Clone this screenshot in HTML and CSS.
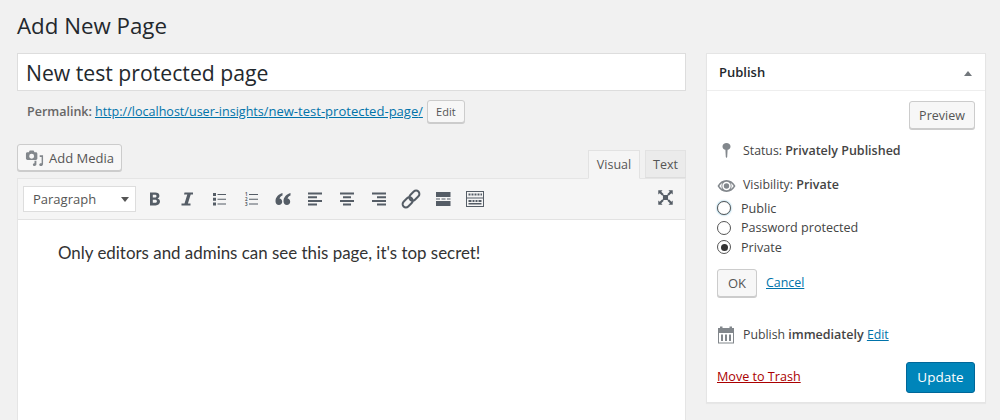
FILE: index.html
```html
<!DOCTYPE html>
<html lang="en">
<head>
<meta charset="utf-8">
<title>Add New Page</title>
<link rel="stylesheet" href="styles.css">
</head>
<body>
<div class="wrap">
  <h1 class="page-title">Add New Page</h1>
  <div class="columns">
    <main class="main">
      <input class="title-input" type="text" value="New test protected page">
      <div class="permalink">
        <span class="permalink-label">Permalink:</span>
        <a href="#" class="link">http://localhost/user-insights/<b class="slug">new-test-protected-page</b>/</a>
        <button class="btn btn-small">Edit</button>
      </div>
      <div class="editor-top">
        <button class="btn btn-media">
          <svg class="media-icon" viewBox="0 0 20 20"><path d="M1 4.500h3l1-2h4l1 2h1.500c.8 0 1.500.7 1.500 1.500v5c0 .8-.7 1.500-1.500 1.500H2.500C1.700 12.500 1 11.800 1 11V6c0-.8.700-1.500 1.500-1.500zM7 6a2.600 2.600 0 1 0 0 5.200A2.600 2.600 0 0 0 7 6z" fill-rule="evenodd"/><path d="M15.500 7.500H19v9.300c0 1.300-1 2.200-2.200 2.200-1 0-1.800-.6-1.800-1.500s.8-1.500 1.700-1.500h.8V9.500h-2zM10 13.500h2v3.700c0 1-.9 1.800-2 1.800-.9 0-1.700-.6-1.700-1.400 0-.9.800-1.500 1.700-1.500z"/></svg>
          Add Media
        </button>
        <div class="tabs">
          <span class="tab tab-active">Visual</span>
          <span class="tab tab-text">Text</span>
        </div>
      </div>
      <div class="editor">
        <div class="toolbar">
          <div class="format-select">Paragraph<i class="caret"></i></div>
          <svg class="tool" viewBox="0 0 20 20"><path fill-rule="evenodd" d="M5 3.500h5.300c2.500 0 4.100 1.200 4.100 3.200 0 1.300-.7 2.300-1.900 2.800 1.500.4 2.500 1.500 2.500 3.100 0 2.300-1.700 3.900-4.400 3.900H5zM7.800 5.700v2.900h1.900c1.100 0 1.800-.5 1.800-1.500s-.7-1.400-1.800-1.400zm0 5v3.100h2.100c1.300 0 2-.6 2-1.600s-.7-1.500-2-1.500z"/></svg>
          <svg class="tool" viewBox="0 0 20 20"><path d="M7.500 3.500H16v2h-2.300L10.900 14.500h2.600v2H4.500v-2h3L10.300 5.500H7z"/></svg>
          <svg class="tool" viewBox="0 0 20 20"><path d="M4 4h3v3H4zm0 4.800h3v3H4zm0 4.800h3v3H4zM8.500 5h8.500v1H8.500zm0 4.800h8.500v1H8.500zm0 4.800h8.500v1H8.500z"/></svg>
          <svg class="tool" viewBox="0 0 20 20"><path d="M8 5h9v1H8zm0 4.800h9v1H8zm0 4.800h9v1H8z"/><text x="4" y="7" class="num">1</text><text x="4" y="12" class="num">2</text><text x="4" y="17" class="num">3</text></svg>
          <svg class="tool" viewBox="0 0 20 20"><path d="M9.500 4C5.500 5.400 2.500 8 2.500 12.200c0 2.300 1.400 3.800 3.400 3.800 1.900 0 3.300-1.400 3.300-3.300 0-1.800-1.200-3-2.700-3.200.4-1.300 1.400-2.400 3-3.100zm8 0c-4 1.400-7 4-7 8.200 0 2.300 1.400 3.800 3.400 3.800 1.900 0 3.300-1.400 3.300-3.300 0-1.800-1.200-3-2.700-3.200.4-1.300 1.400-2.400 3-3.100z"/></svg>
          <svg class="tool" viewBox="0 0 20 20"><path d="M3 3.500h14v2H3zm0 3.700h9v2H3zm0 3.700h14v2H3zm0 3.700h9v2H3z"/></svg>
          <svg class="tool" viewBox="0 0 20 20"><path d="M3 3.500h14v2H3zm3 3.700h8v2H6zm-3 3.700h14v2H3zm3 3.700h8v2H6z"/></svg>
          <svg class="tool" viewBox="0 0 20 20"><path d="M3 3.500h14v2H3zm5 3.700h9v2H8zm-5 3.700h14v2H3zm5 3.700h9v2H8z"/></svg>
          <svg class="tool" viewBox="0 0 20 20"><g transform="rotate(-45 10 10)" fill="none" stroke="#555d66" stroke-width="2"><rect x="-.5" y="6.700" width="11.500" height="6.600" rx="3.300"/><rect x="9" y="6.700" width="11.500" height="6.600" rx="3.300"/></g></svg>
          <svg class="tool" viewBox="0 0 20 20"><path d="M3 3h14.500v5H3zm0 9h14.500v5H3zM3 9.500h4v1H3zm5.500 0h4v1h-4zm5.500 0h3.500v1H14z"/></svg>
          <svg class="tool" viewBox="0 0 20 20"><path fill-rule="evenodd" d="M1 2h18v16H1zm1 1v5.500h16V3zm0 6.500V17h16V9.500zM3.500 4.500h2v2h-2zm3 0h2v2h-2zm3 0h2v2h-2zm3 0h2v2h-2zm3 0h1.500v2h-1.500zM3.500 11h3v2h-3zm4 0h2v2h-2zm3 0h2v2h-2zm3 0h3v2h-3zM3.500 14h13v1.500h-13z"/></svg>
          <svg class="tool tool-full" viewBox="0 0 20 20"><path d="M7 7h6v6H7zM1.500 1.500h5L5 3.200l3 3-1.800 1.800-3-3-1.700 1.500zm17 0v5L16.800 5l-3 3L12 6.200l3-3-1.500-1.700zm-17 17v-5L3.200 15l3-3L8 13.800l-3 3 1.500 1.700zm17 0h-5l1.700-1.700-3-3 1.800-1.800 3 3 1.500-1.500z"/></svg>
        </div>
        <div class="content">
          <p class="content-text">Only editors and admins can see this page, it's top secret!</p>
        </div>
      </div>
    </main>
    <aside class="panel">
      <h2 class="panel-head">Publish<i class="panel-toggle"></i></h2>
      <div class="panel-body">
        <div class="preview-row"><button class="btn btn-preview">Preview</button></div>
        <div class="row row-status">
          <svg class="meta-icon" viewBox="0 0 20 20"><path d="M9.500 3c2.200 0 4 1.400 4 3.400 0 1.700-1.200 3-2.900 3.400L10.200 17l-.7 1-.7-1-.4-7.200C6.700 9.400 5.500 8.100 5.500 6.400 5.500 4.400 7.300 3 9.500 3z"/></svg>
          <span>Status: <b class="strong">Privately Published</b></span>
        </div>
        <div class="row row-visibility">
          <svg class="meta-icon" viewBox="0 0 20 20"><g transform="translate(0 2)"><path fill-rule="evenodd" d="M9.500 4C13.300 4 16.400 6.200 18.500 10c-2.100 3.800-5.200 6-9 6S2.600 13.800.5 10C2.600 6.200 5.700 4 9.500 4zM9.500 5.800a4.200 4.200 0 1 0 0 8.400 4.200 4.200 0 0 0 0-8.400zM2.300 10c.8 1.300 2 2.500 3.200 3.300A6 6 0 0 1 5.500 6.700C4.300 7.500 3.100 8.700 2.300 10zm11.200-3.300a6 6 0 0 1 0 6.600c1.200-.8 2.400-2 3.200-3.300-.8-1.300-2-2.500-3.200-3.300zM9.500 7.300a2.700 2.700 0 1 1 0 5.400 2.700 2.700 0 0 1 0-5.400z"/></g></svg>
          <span>Visibility: <b class="strong">Private</b></span>
        </div>
        <div class="radios">
          <label class="radio-row"><i class="radio radio-focus"></i>Public</label>
          <label class="radio-row"><i class="radio"></i>Password protected</label>
          <label class="radio-row"><i class="radio radio-on"></i>Private</label>
        </div>
        <div class="ok-row">
          <button class="btn btn-ok">OK</button>
          <a href="#" class="link">Cancel</a>
        </div>
        <div class="row row-date">
          <svg class="meta-icon" viewBox="0 0 20 20"><path fill-rule="evenodd" d="M1 3h2V1.500h2.500V3h7V1.500H15V3h2v15.500H1zM2 8v9.500h14V8zM4 9.500h2V16H4zm4 0h2V16H8zm4 0h2V16h-2z"/></svg>
          <span>Publish <b class="strong">immediately</b> <a href="#" class="link">Edit</a></span>
        </div>
        <div class="actions">
          <a href="#" class="trash">Move to Trash</a>
          <button class="btn-primary">Update</button>
        </div>
      </div>
    </aside>
  </div>
</div>
</body>
</html>
```
FILE: styles.css
```css
* { box-sizing: border-box; }
html, body { height: 420px; overflow: hidden; }
body {
  margin: 0;
  background: #f1f1f1;
  color: #444;
  font: 13px/19px "Open Sans", sans-serif;
}
.wrap { padding: 0 14px 0 17px; }
.page-title {
  margin: 0;
  padding-top: 11px;
  height: 53px;
  color: #23282d;
  font-size: 22.300px;
  line-height: 30px;
  font-weight: 400;
}
.columns { display: grid; grid-template-columns: 669px 280px; column-gap: 20px; align-items: start; }
.title-input {
  display: block;
  width: 100%;
  height: 38px;
  padding: 0 8px;
  border: 1px solid #ddd;
  background: #fff;
  color: #23282d;
  font: 21.200px/36px "Open Sans", sans-serif;
  outline: 0;
}
.permalink {
  display: flex;
  align-items: center;
  height: 24px;
  margin-top: 8px;
  padding-left: 10px;
  color: #666;
}
.permalink-label { font-weight: 600; margin-right: 3px; font-size: 12.500px; }
.link { color: #0073aa; text-decoration: underline; }
.permalink .link { font-size: 12.550px; margin-right: 4px; }
.slug { font-weight: 400; font-size: 13.050px; }
.btn {
  display: inline-flex;
  align-items: center;
  justify-content: center;
  border: 1px solid #ccc;
  border-radius: 3px;
  background: #f7f7f7;
  box-shadow: 0 1px 0 #ccc;
  color: #555;
  font: 13px "Open Sans", sans-serif;
  padding: 0;
}
.btn-small { width: 38px; height: 23px; font-size: 11px; }
.editor-top { display: flex; justify-content: space-between; align-items: flex-end; height: 36px; margin-top: 20px; margin-bottom: -1px; position: relative; }
.btn-media { width: 105px; height: 27px; gap: 5px; margin-bottom: 8px; justify-content: flex-start; padding-left: 7px; }
.media-icon { width: 19px; height: 19px; fill: #82878c; }
.tabs { display: flex; gap: 5px; margin-bottom: 1px; }
.tab {
  display: block;
  width: 41px;
  height: 28px;
  border: 1px solid #e2e2e2;
  border-bottom-color: #ddd;
  background: #ebebeb;
  color: #555;
  font-size: 12.500px;
  line-height: 28px;
  text-align: center;
}
.tab-active { width: 52px; height: 29px; background: #f5f5f5; border-bottom-color: #f5f5f5; margin-bottom: -1px; position: relative; z-index: 1; }
.editor { border: 1px solid #e5e5e5; border-bottom: 0; background: #fff; height: 243px; }
.toolbar {
  display: flex;
  align-items: center;
  height: 41px;
  padding: 0 10px 0 5px;
  background: #f5f5f5;
  border-bottom: 1px solid #e2e2e2;
}
.format-select {
  position: relative;
  width: 113px;
  height: 26px;
  padding-left: 9px;
  border: 1px solid #ddd;
  background: #fff;
  color: #555;
  font-size: 13px;
  line-height: 24px;
  margin-right: 3px;
}
.caret {
  position: absolute;
  right: 6px;
  top: 10px;
  border: 4px solid transparent;
  border-top: 5px solid #555;
  border-bottom: 0;
}
.tool { width: 20px; height: 20px; margin: 0 6px; fill: #555d66; flex: none; }
.tool-full { margin: 0 1px 4px auto; width: 17px; height: 17px; }
.num { font: 700 4.500px "Open Sans", sans-serif; fill: #555d66; }
.content { padding: 21px 40px; }
.content-text { margin: 0; color: #333; font: 16.920px/24px Lato, sans-serif; }
.panel { height: 350px; background: #fff; border: 1px solid #e5e5e5; box-shadow: 0 1px 1px rgba(0,0,0,.04); font-size: 12.600px; }
.panel-head {
  position: relative;
  margin: 0;
  height: 37px;
  padding: 8px 12px;
  border-bottom: 1px solid #eee;
  color: #23282d;
  font-size: 13px;
  line-height: 20px;
  font-weight: 600;
}
.panel-toggle {
  position: absolute;
  right: 13px;
  top: 17px;
  border: 4.500px solid transparent;
  border-bottom: 5px solid #72777c;
  border-top: 0;
}
.panel-body { padding: 10px 10px 0; }
.preview-row { display: flex; justify-content: flex-end; }
.btn-preview { width: 66px; height: 28px; font-size: 12.500px; }
.row { display: flex; align-items: center; height: 20px; }
.row span { margin-left: 6px; font-size: 12.300px; }
.row-status { margin-top: 11px; }
.row-visibility { margin-top: 14px; }
.row-date { margin-top: 28px; }
.meta-icon { width: 20px; height: 20px; fill: #82878c; flex: none; }
.strong { font-weight: 600; font-size: 12.500px; }
.radios { margin-top: 4.700px; display: flex; flex-direction: column; }
.radio-row { display: flex; align-items: center; height: 19.500px; gap: 10px; }
.radio { width: 14px; height: 14px; border: 1px solid #555; border-radius: 50%; background: #fff; position: relative; flex: none; }
.radio-focus { box-shadow: 0 0 2px rgba(30,140,190,.7); }
.radio-on::after { content: ""; position: absolute; left: 2.500px; top: 2.500px; width: 7px; height: 7px; border-radius: 50%; background: #333; }
.ok-row { display: flex; align-items: center; gap: 9px; margin-top: 11.800px; }
.ok-row .link { font-size: 12.400px; }
.btn-ok { width: 40px; height: 28px; }
.actions { display: flex; justify-content: space-between; align-items: center; margin-top: 17px; }
.trash { color: #a00; text-decoration: underline; margin-bottom: 2px; }
.btn-primary {
  width: 69px;
  height: 31px;
  border: 1px solid #006799;
  border-radius: 3px;
  background: #0085ba;
  color: #fff;
  font: 13.500px "Open Sans", sans-serif;
  padding: 0;
}
```
